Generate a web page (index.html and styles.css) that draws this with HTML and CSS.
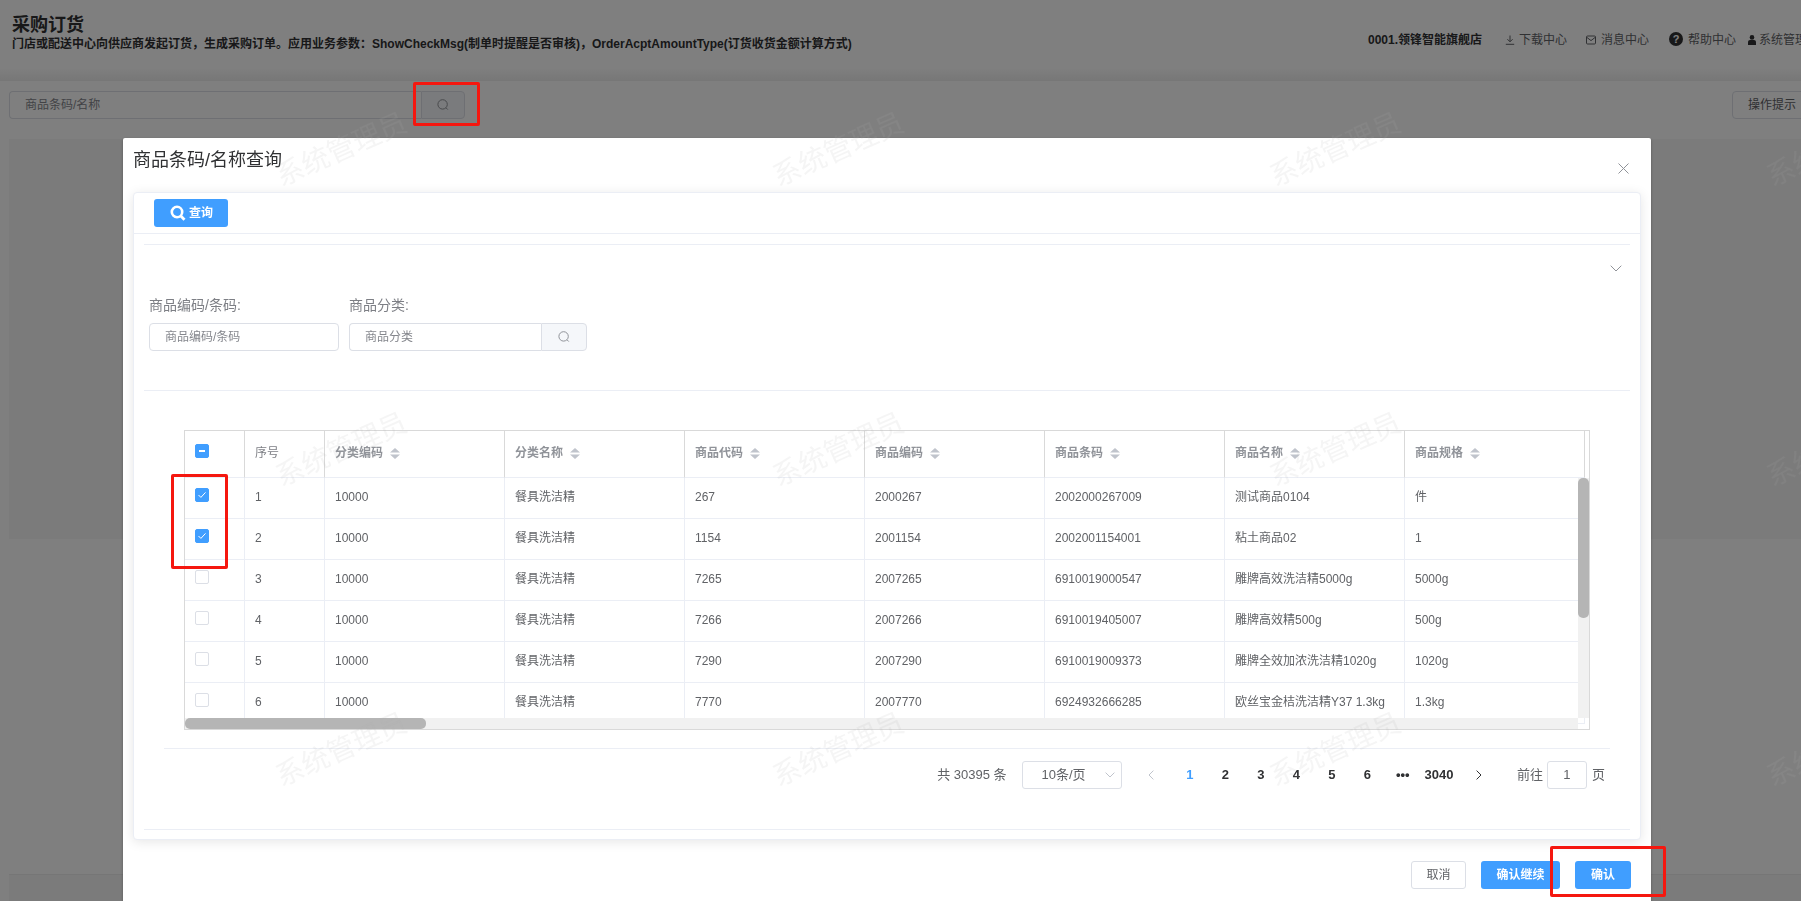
FILE: index.html
```html
<!DOCTYPE html>
<html lang="zh-CN">
<head>
<meta charset="utf-8">
<title>采购订货</title>
<link rel="stylesheet" href="styles.css">
</head>
<body>
<div class="page">
  <header class="top">
    <div class="top-left">
      <h1 class="page-title">采购订货</h1>
      <p class="page-desc">门店或配送中心向供应商发起订货，生成采购订单。应用业务参数：ShowCheckMsg(制单时提醒是否审核)，OrderAcptAmountType(订货收货金额计算方式)</p>
    </div>
    <nav class="top-right">
      <span class="store">0001.领锋智能旗舰店</span>
      <span class="nav-item nav-dl"><svg class="ico10" viewBox="0 0 10 10"><path d="M5 .5v6M2.4 4.2 5 6.8l2.6-2.6M.8 9.3h8.4" fill="none" stroke="#606266"/></svg>下载中心</span>
      <span class="nav-item nav-msg"><svg class="ico10" viewBox="0 0 10 10"><rect x=".5" y="1" width="9" height="8" rx="1" fill="none" stroke="#606266"/><path d="M1 2.5 5 5.6l4-3.1" fill="none" stroke="#606266"/></svg>消息中心</span>
      <span class="nav-item nav-help"><span class="help-ico">?</span>帮助中心</span>
      <span class="nav-item nav-user"><svg class="ico-user" viewBox="0 0 8 10"><circle cx="4" cy="2.4" r="2.3" fill="#303133"/><path d="M0 10V7.2C0 5.8 1 5 2 5h4c1 0 2 .8 2 2.2V10z" fill="#303133"/></svg>系统管理员</span>
    </nav>
  </header>
  <div class="toolbar">
    <div class="search-group search-main">
      <span class="search-input">商品条码/名称</span>
      <span class="search-addon"><svg class="ico-search" viewBox="0 0 14 14"><circle cx="6.6" cy="6.4" r="4.7" fill="none" stroke="#909399"/><path d="m10 9.8 1.8 1.8" stroke="#909399" fill="none"/></svg></span>
    </div>
    <button class="tip-btn">操作提示</button>
  </div>
  <div class="panel panel-a"></div>
  <div class="panel panel-b"></div>
</div>

<div class="mask"></div>

<section class="dialog">
  <div class="dialog-head">
    <h2 class="dialog-title">商品条码/名称查询</h2>
    <svg class="dialog-close" viewBox="0 0 11 11"><path d="M.5.5l10 10M10.5.5l-10 10" stroke="#909399" fill="none"/></svg>
  </div>
  <div class="card">
    <div class="card-toolbar">
      <button class="btn btn-primary btn-query"><svg class="ico-query" viewBox="0 0 16 16"><circle cx="7" cy="7" r="5.2" fill="none" stroke="#fff" stroke-width="2.6"/><path d="m10.6 10.8 3.9 3.9" stroke="#fff" stroke-width="2.8" fill="none"/></svg>查询</button>
    </div>
    <div class="card-body">
      <div class="collapse-row">
        <svg class="ico-chevron" viewBox="0 0 12 7"><path d="m.7.7 5.3 5.3L11.3.7" fill="none" stroke="#909399"/></svg>
      </div>
      <div class="filter-row">
        <div class="field field-code">
          <label class="field-label">商品编码/条码:</label>
          <span class="field-input">商品编码/条码</span>
        </div>
        <div class="field field-cat">
          <label class="field-label">商品分类:</label>
          <div class="search-group">
            <span class="search-input field-search">商品分类</span>
            <span class="search-addon addon-wide"><svg class="ico-search" viewBox="0 0 14 14"><circle cx="6.6" cy="6.4" r="4.7" fill="none" stroke="#909399"/><path d="m10 9.8 1.8 1.8" stroke="#909399" fill="none"/></svg></span>
          </div>
        </div>
      </div>
      <div class="divider divider-filter"></div>

      <div class="table-wrap">
        <table class="grid">
          <colgroup>
            <col class="c-check"><col class="c-index"><col class="c-w"><col class="c-w"><col class="c-w"><col class="c-w"><col class="c-w"><col class="c-w"><col class="c-w">
          </colgroup>
          <thead>
            <tr>
              <th class="check-cell"><span class="check check-on check-part"><i class="dash"></i></span></th>
              <th class="th-plain">序号</th>
              <th>分类编码<svg class="sort" viewBox="0 0 10 11"><path d="M5 0l5 4.5H0zM5 11 0 6.5h10z" fill="#c0c4cc"/></svg></th>
              <th>分类名称<svg class="sort" viewBox="0 0 10 11"><path d="M5 0l5 4.5H0zM5 11 0 6.5h10z" fill="#c0c4cc"/></svg></th>
              <th>商品代码<svg class="sort" viewBox="0 0 10 11"><path d="M5 0l5 4.5H0zM5 11 0 6.5h10z" fill="#c0c4cc"/></svg></th>
              <th>商品编码<svg class="sort" viewBox="0 0 10 11"><path d="M5 0l5 4.5H0zM5 11 0 6.5h10z" fill="#c0c4cc"/></svg></th>
              <th>商品条码<svg class="sort" viewBox="0 0 10 11"><path d="M5 0l5 4.5H0zM5 11 0 6.5h10z" fill="#c0c4cc"/></svg></th>
              <th>商品名称<svg class="sort" viewBox="0 0 10 11"><path d="M5 0l5 4.5H0zM5 11 0 6.5h10z" fill="#c0c4cc"/></svg></th>
              <th>商品规格<svg class="sort" viewBox="0 0 10 11"><path d="M5 0l5 4.5H0zM5 11 0 6.5h10z" fill="#c0c4cc"/></svg></th>
            </tr>
          </thead>
          <tbody>
            <tr>
              <td class="check-cell"><span class="check check-on"><svg class="tick" viewBox="0 0 10 8"><path d="m1.5 4 2.4 2.4 4.6-5" fill="none" stroke="#fff"/></svg></span></td>
              <td>1</td><td>10000</td><td>餐具洗洁精</td><td>267</td><td>2000267</td><td>2002000267009</td><td>测试商品0104</td><td>件</td>
            </tr>
            <tr>
              <td class="check-cell"><span class="check check-on"><svg class="tick" viewBox="0 0 10 8"><path d="m1.5 4 2.4 2.4 4.6-5" fill="none" stroke="#fff"/></svg></span></td>
              <td>2</td><td>10000</td><td>餐具洗洁精</td><td>1154</td><td>2001154</td><td>2002001154001</td><td>粘土商品02</td><td>1</td>
            </tr>
            <tr>
              <td class="check-cell"><span class="check"></span></td>
              <td>3</td><td>10000</td><td>餐具洗洁精</td><td>7265</td><td>2007265</td><td>6910019000547</td><td>雕牌高效洗洁精5000g</td><td>5000g</td>
            </tr>
            <tr>
              <td class="check-cell"><span class="check"></span></td>
              <td>4</td><td>10000</td><td>餐具洗洁精</td><td>7266</td><td>2007266</td><td>6910019405007</td><td>雕牌高效精500g</td><td>500g</td>
            </tr>
            <tr>
              <td class="check-cell"><span class="check"></span></td>
              <td>5</td><td>10000</td><td>餐具洗洁精</td><td>7290</td><td>2007290</td><td>6910019009373</td><td>雕牌全效加浓洗洁精1020g</td><td>1020g</td>
            </tr>
            <tr>
              <td class="check-cell"><span class="check"></span></td>
              <td>6</td><td>10000</td><td>餐具洗洁精</td><td>7770</td><td>2007770</td><td>6924932666285</td><td>欧丝宝金桔洗洁精Y37 1.3kg</td><td>1.3kg</td>
            </tr>
          </tbody>
        </table>
        <div class="bar-h"><i class="thumb-h"></i></div>
        <div class="bar-v"><i class="thumb-v"></i></div>
      </div>

      <div class="pagination">
        <span class="pg-total">共 30395 条</span>
        <span class="pg-select">10条/页<svg class="ico-select" viewBox="0 0 10 6"><path d="m.6.6 4.4 4.4L9.4.6" fill="none" stroke="#c0c4cc"/></svg></span>
        <span class="pg-arrow"><svg class="ico-arrow" viewBox="0 0 6 10"><path d="M5.4.6 1 5l4.4 4.4" fill="none" stroke="#c0c4cc"/></svg></span>
        <ul class="pager">
          <li class="active">1</li><li>2</li><li>3</li><li>4</li><li>5</li><li>6</li><li>•••</li><li>3040</li>
        </ul>
        <span class="pg-arrow"><svg class="ico-arrow" viewBox="0 0 6 10"><path d="M.6.6 5 5 .6 9.4" fill="none" stroke="#303133"/></svg></span>
        <span class="pg-jump">前往<span class="pg-input">1</span>页</span>
      </div>
      <div class="divider divider-end"></div>
    </div>
  </div>
  <div class="dialog-foot">
    <button class="btn btn-plain">取消</button>
    <button class="btn btn-primary btn-more">确认继续</button>
    <button class="btn btn-primary">确认</button>
  </div>
</section>

<div class="mark mark-1"></div>
<div class="mark mark-2"></div>
<div class="mark mark-3"></div>

<div class="watermarks">
  <span>系统管理员</span><span>系统管理员</span><span>系统管理员</span><span>系统管理员</span>
  <span>系统管理员</span><span>系统管理员</span><span>系统管理员</span><span>系统管理员</span>
  <span>系统管理员</span><span>系统管理员</span><span>系统管理员</span><span>系统管理员</span>
</div>
</body>
</html>
```
FILE: styles.css
```css
* { box-sizing: border-box; }
html, body { margin: 0; height: 100%; overflow: hidden; }
body {
  background: #fff;
  color: #606266;
  font: 12px/1.5 "Liberation Sans", "Noto Sans CJK SC", sans-serif;
}
h1, h2, p, ul { margin: 0; padding: 0; }
ul { list-style: none; }
button { font: inherit; cursor: pointer; }

/* page behind the dialog */
.page { height: 901px; overflow: hidden; }
.top {
  display: flex;
  height: 81px;
  background: linear-gradient(to bottom, #fff 84%, #eee 100%);
}
.top-left { flex: 0 0 1368px; padding: 13px 0 0 12px; }
.page-title { font-size: 18px; line-height: 24px; font-weight: 700; color: #303133; }
.page-desc { font-size: 12px; line-height: 16px; margin-top: -1px; font-weight: 700; color: #303133; white-space: nowrap; }
.top-right { display: flex; align-items: center; height: 22px; margin-top: 29px; white-space: nowrap; flex: none; }
.store { font-weight: 700; color: #303133; width: 115px; }
.nav-item { display: flex; align-items: center; }
.nav-dl { margin-left: 22px; }
.nav-msg { margin-left: 19px; }
.nav-help { margin-left: 20px; }
.nav-user { margin-left: 12px; }
.ico10 { width: 10px; height: 10px; margin-right: 4px; }
.nav-msg .ico10 { margin-right: 5px; }
.ico-user { width: 8px; height: 10px; margin-right: 3px; }
.help-ico {
  width: 14px; height: 14px; margin-right: 5px; margin-top: -3px;
  border-radius: 50%; background: #303133; color: #fff;
  font-size: 11px; font-weight: 700; line-height: 14px; text-align: center;
}

.toolbar { display: flex; align-items: flex-start; height: 58px; padding: 10px 0 0 9px; }
.search-group { display: flex; height: 28px; }
.search-main { width: 456px; }
.search-input {
  flex: 1;
  border: 1px solid #dcdfe6; border-right: 0; border-radius: 4px 0 0 4px;
  padding-left: 15px; line-height: 26px; color: #85878d; background: #fff;
}
.search-addon {
  flex: 0 0 44px;
  display: flex; align-items: center; justify-content: center;
  background: #f5f7fa;
  border: 1px solid #dcdfe6; border-radius: 0 4px 4px 0;
}
.addon-wide { flex-basis: 46px; }
.ico-search { width: 14px; height: 14px; }
.tip-btn {
  margin-left: auto; margin-right: -6px;
  width: 75px; height: 28px; padding: 0 0 0 15px; text-align: left;
  background: #fff; border: 1px solid #dcdfe6; border-radius: 4px; color: #606266;
}
.panel { margin-left: 9px; background: #f6f6f6; }
.panel-a { height: 400px; }
.panel-b { height: 60px; margin-top: 335px; border-top: 1px solid #ececec; }

.mask { position: fixed; inset: 0; background: rgba(0,0,0,.5); }

/* dialog */
.dialog {
  position: fixed; left: 123px; top: 138px; width: 1528px; height: 780px;
  background: #fff; border-radius: 2px;
  box-shadow: 0 1px 3px rgba(0,0,0,.3);
}
.dialog-head { display: flex; justify-content: space-between; align-items: flex-start; height: 54px; padding: 10px 22px 0 10px; }
.dialog-title { font-size: 18px; line-height: 24px; font-weight: 400; color: #303133; }
.dialog-close { width: 11px; height: 11px; margin-top: 15px; }

.card {
  margin: 0 10px;
  background: #fff;
  border: 1px solid #ebeef5; border-radius: 4px;
  box-shadow: 0 2px 12px rgba(0,0,0,.1);
}
.card-toolbar { height: 41px; padding: 6px 0 0 20px; border-bottom: 1px solid #ebeef5; }
.btn { height: 28px; border-radius: 3px; font-size: 12px; border: 1px solid transparent; padding: 0; }
.btn-primary { background: #409eff; color: #fff; font-weight: 700; width: 56px; }
.btn-plain { background: #fff; border-color: #dcdfe6; color: #606266; width: 55px; }
.btn-more { width: 79px; }
.btn-query { width: 74px; display: flex; align-items: center; padding-left: 15px; }
.ico-query { width: 16px; height: 16px; margin-right: 3px; }

.card-body { margin: 10px 10px 9px; border-top: 1px solid #ebeef5; }
.collapse-row { height: 51px; display: flex; justify-content: flex-end; padding: 20px 8px 0 0; }
.ico-chevron { width: 12px; height: 7px; }
.filter-row { display: flex; gap: 10px; padding-left: 5px; }
.field-code { width: 190px; }
.field-cat { width: 238px; }
.field-label { display: block; font-size: 14px; line-height: 18px; margin-bottom: 9px; color: #7d7f85; }
.field-input {
  display: block; height: 28px; line-height: 26px; padding-left: 15px;
  border: 1px solid #dcdfe6; border-radius: 4px; color: #85878d;
}
.divider { border-top: 1px solid #ebeef5; }
.divider-filter { margin-top: 39px; }
.divider-end { margin-top: 40px; }

/* table */
.table-wrap {
  position: relative;
  height: 300px; margin: 39px 40px 0 40px;
  border: 1px solid #d9d9d9;
  overflow: hidden;
}
.grid { table-layout: fixed; width: 1400px; border-collapse: separate; border-spacing: 0; }
.c-check { width: 60px; }
.c-index { width: 80px; }
.c-w { width: 180px; }
.grid th, .grid td {
  padding: 0 0 2px 10px; text-align: left; white-space: nowrap; overflow: hidden;
  font-size: 12px; line-height: 18px;
}
.grid th { height: 47px; color: #909399; font-weight: 700; border-right: 1px solid #d9d9d9; border-bottom: 1px solid #ebeef5; }
.grid td { height: 41px; color: #606266; border-right: 1px solid #ebeef5; border-bottom: 1px solid #ebeef5; }
.grid .th-plain { font-weight: 400; color: #7d7f85; }
.grid .check-cell { padding-bottom: 6px; }
.check {
  display: block; width: 14px; height: 14px;
  border: 1px solid #dcdfe6; border-radius: 2px; background: #fff;
}
.check-on { background: #409eff; border-color: #409eff; position: relative; }
.tick { display: block; width: 10px; height: 8px; margin: 2px 1px; }
.dash { display: block; width: 6px; height: 2px; margin: 5px 3px; background: #fff; }
.sort { width: 10px; height: 11px; margin-left: 7px; vertical-align: -2px; }
.bar-h { position: absolute; left: 0; right: 11px; bottom: 0; height: 11px; background: #f1f1f1; }
.thumb-h { display: block; width: 241px; height: 11px; background: #b5b5b5; border-radius: 5px; }
.bar-v { position: absolute; right: 0; top: 47px; bottom: 11px; width: 11px; background: #f1f1f1; }
.thumb-v { display: block; width: 11px; height: 140px; background: #b5b5b5; border-radius: 5px; }

/* pagination */
.pagination {
  display: flex; align-items: center; justify-content: flex-end;
  margin: 18px 20px 0 20px; padding: 12px 5px 0 0;
  border-top: 1px solid #ebeef5;
  font-size: 13px; color: #606266;
}
.pg-total { margin-right: 15px; }
.pg-select {
  width: 100px; height: 28px; line-height: 26px; padding-left: 19px; margin-right: 12px;
  border: 1px solid #dcdfe6; border-radius: 3px; position: relative;
  display: flex; align-items: center; justify-content: space-between; padding-right: 6px;
}
.ico-select { width: 10px; height: 6px; }
.pg-arrow { width: 35.5px; height: 28px; display: flex; align-items: center; justify-content: center; }
.ico-arrow { width: 6px; height: 10px; }
.pager { display: flex; margin-left: 3px; margin-right: 4px; }
.pager li { min-width: 35.5px; padding: 0 4px; height: 28px; line-height: 28px; text-align: center; font-weight: 700; color: #303133; }
.pager li.active { color: #409eff; }
.pg-jump { display: flex; align-items: center; margin-left: 20px; }
.pg-input {
  width: 40px; height: 28px; line-height: 26px; margin: 0 5px 0 4px; text-align: center;
  border: 1px solid #dcdfe6; border-radius: 3px;
}

.dialog-foot { display: flex; justify-content: flex-end; gap: 15px; margin-top: 21px; padding-right: 20px; }

/* red annotation boxes */
.mark { position: fixed; border: 3px solid #f5170f; border-radius: 2px; }
.mark-1 { left: 413px; top: 82px; width: 67px; height: 44px; }
.mark-2 { left: 171px; top: 474px; width: 57px; height: 95px; }
.mark-3 { left: 1550px; top: 846px; width: 116px; height: 51px; }

/* watermark */
.watermarks {
  position: fixed; inset: 0; overflow: hidden; pointer-events: none;
  display: grid; grid-template-columns: repeat(4, 497px); grid-auto-rows: 300px;
  padding-left: 93px;
}
.watermarks span {
  display: flex; align-items: center; justify-content: center;
  transform: rotate(-24deg);
  font-size: 28px; line-height: 30px; white-space: nowrap;
  color: rgba(170,170,170,.12);
}
```
